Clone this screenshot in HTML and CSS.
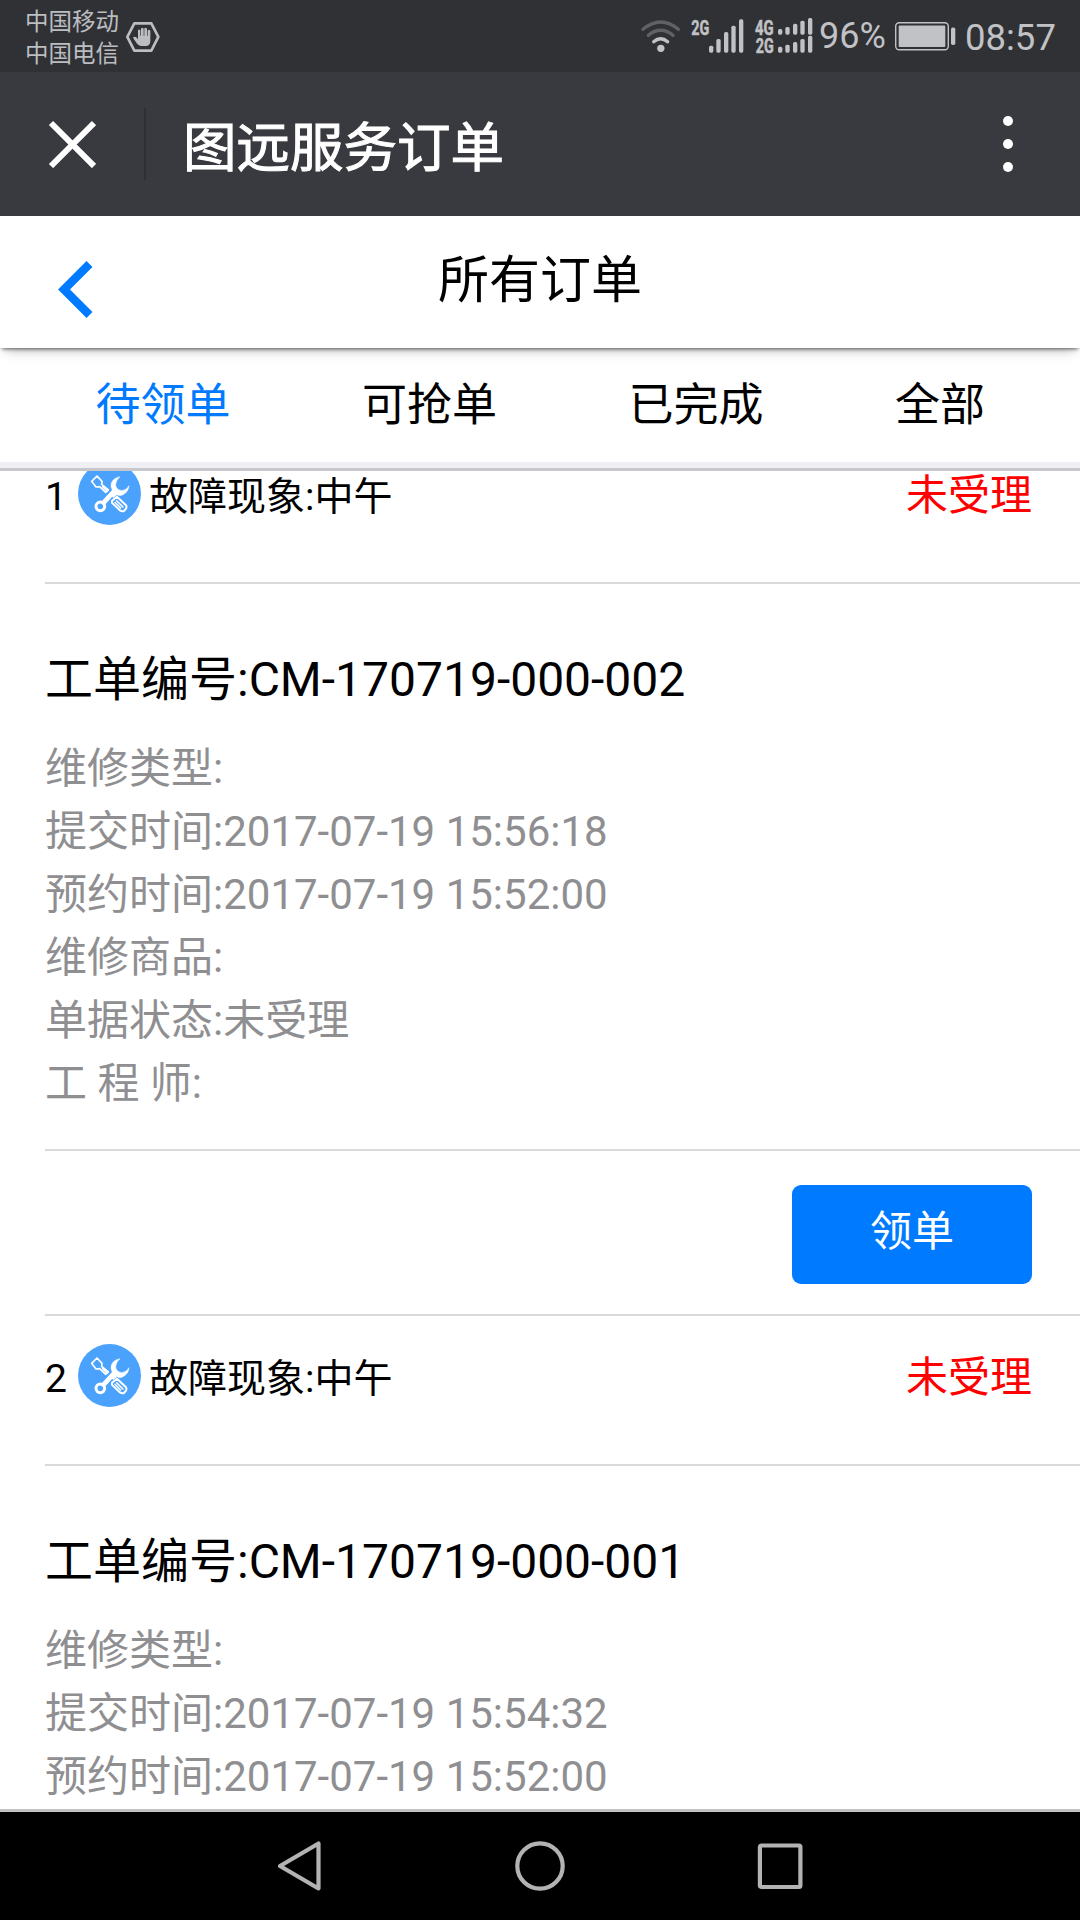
FILE: index.html
```html
<!DOCTYPE html>
<html lang="zh-CN">
<head>
<meta charset="utf-8">
<title>图远服务订单</title>
<link rel="stylesheet" href="styles.css">
</head>
<body>
<div class="phone">
  <div class="status">
    <div class="carriers"><div>中国移动</div><div>中国电信</div></div>
    <svg class="hand" width="34" height="32" viewBox="377 63 102 96">
      <path d="M402 70H453L474 110.500L453 152H402L381 110.500Z" fill="none" stroke="#bcbdc1" stroke-width="8" stroke-linejoin="round"/>
      <path d="M398 113Q402 108 408 112L413 118V91Q416 86 420 91V107H422V86Q426 81 430 86V107H432V85Q436 81 440 86V107H442V92Q446 87 450 92V124Q449 137 439 138H421Q414 137 409 130Z" fill="#bcbdc1"/>
    </svg>
    <svg class="signals" width="180" height="72" viewBox="48 0 540 216">
      <g fill="none" stroke-width="10" stroke-linecap="round">
        <path d="M69 88Q122 44 175 88" stroke="#606165"/>
        <path d="M85 106Q122 76 159 106" stroke="#606165"/>
        <path d="M101 125Q122 107 143 125" stroke="#c1c2c6"/>
      </g>
      <circle cx="122.500" cy="145" r="11" fill="#c1c2c6"/>
      <g class="net">
        <text x="214" y="104" textLength="54" lengthAdjust="spacingAndGlyphs">2G</text>
        <text x="405" y="104" textLength="56" lengthAdjust="spacingAndGlyphs">4G</text>
        <text x="407" y="158" textLength="54" lengthAdjust="spacingAndGlyphs">2G</text>
      </g>
      <g fill="#c1c2c6">
        <rect x="267" y="137" width="13" height="21" rx="5"/><rect x="289" y="117" width="13" height="41" rx="5"/><rect x="312" y="96" width="13" height="62" rx="5"/><rect x="334" y="77" width="13" height="81" rx="5"/><rect x="357" y="58" width="13" height="100" rx="5"/>
        <rect x="474" y="87" width="13" height="17" rx="5"/><rect x="496" y="81" width="13" height="23" rx="5"/><rect x="519" y="71" width="13" height="33" rx="5"/><rect x="541" y="62" width="13" height="42" rx="5"/><rect x="564" y="54" width="13" height="50" rx="5"/>
        <rect x="474" y="140" width="13" height="18" rx="5"/><rect x="496" y="134" width="13" height="24" rx="5"/><rect x="519" y="126" width="13" height="32" rx="5"/><rect x="541" y="117" width="13" height="41" rx="5"/><rect x="564" y="107" width="13" height="51" rx="5"/>
      </g>
    </svg>
    <span class="percent">96%</span>
    <svg class="battery" width="61" height="29" viewBox="0 0 61 29">
      <rect x=".7" y=".7" width="52.600" height="27" rx="3.500" fill="none" stroke="#c1c2c6" stroke-width="1.400"/>
      <rect x="3.700" y="3.400" width="46.600" height="21.600" rx="1" fill="#c1c2c6"/>
      <rect x="56" y="5.500" width="4.300" height="17.500" rx="1.700" fill="#c1c2c6"/>
    </svg>
    <span class="clock">08:57</span>
  </div>

  <div class="titlebar">
    <svg class="close" width="48" height="48" viewBox="0 0 48 48"><path d="M3 3L46 46M46 3L3 46" stroke="#fff" stroke-width="6"/></svg>
    <div class="divider"></div>
    <h1 class="app-name">图远服务订单</h1>
    <svg class="more" width="10" height="58" viewBox="0 0 10 58" fill="#fff"><circle cx="5" cy="6" r="5"/><circle cx="5" cy="29" r="5"/><circle cx="5" cy="52" r="5"/></svg>
  </div>

  <div class="header">
    <svg class="back" width="36" height="58" viewBox="0 0 36 58"><path d="M31.500 4L6 29.500L31.500 55" fill="none" stroke="#007aff" stroke-width="8.400"/></svg>
    <h2 class="page-name">所有订单</h2>
  </div>

  <div class="tabs">
    <span class="tab active">待领单</span><span class="tab">可抢单</span><span class="tab">已完成</span><span class="tab">全部</span>
  </div>

  <svg class="defs" width="0" height="0">
    <symbol id="tools" viewBox="234 132 189 189">
      <circle cx="328.500" cy="226.500" r="94.500" fill="#4ba2fd"/>
      <g fill="none" stroke="#fff" stroke-linejoin="round" stroke-linecap="round">
        <path d="M275 190L291 174L306 190L305 199L325 216L317 223L299 206L288 207Z" stroke-width="5"/>
        <path d="M308 206L319 217" stroke-width="5"/>
        <path d="M311 254L344 218" stroke-width="14"/>
        <circle cx="301" cy="265" r="13" stroke-width="9"/>
        <path d="M336 248L351 236L378 262Q381 267 378 272L372 279Q366 281 361 278L336 254Z" stroke-width="6"/>
        <path d="M350 248L369 267M345 253L362 270" stroke-width="4.500"/>
      </g>
      <path d="M360 176Q333 181 333 204Q334 212 338 218L330 229L340 239L351 230Q359 235 369 230Q385 222 387 203Q379 217 365 218Q348 215 347 200Q348 186 360 176Z" fill="#fff" stroke="#fff" stroke-width="1.500"/>
    </symbol>
  </svg>

  <div class="list">
    <div class="card">
      <div class="row head"><span class="num">1</span><svg class="tools" width="63" height="63"><use href="#tools"/></svg><span class="fault">故障现象:中午</span><span class="state">未受理</span></div>
      <div class="row body">
        <h3 class="order">工单编号:CM-170719-000-002</h3>
        <div class="details">
          <div>维修类型:</div>
          <div>提交时间:2017-07-19 15:56:18</div>
          <div>预约时间:2017-07-19 15:52:00</div>
          <div>维修商品:</div>
          <div>单据状态:未受理</div>
          <div>工 程 师:</div>
        </div>
      </div>
      <div class="row foot"><button class="take">领单</button></div>
    </div>
    <div class="card">
      <div class="row head"><span class="num">2</span><svg class="tools" width="63" height="63"><use href="#tools"/></svg><span class="fault">故障现象:中午</span><span class="state">未受理</span></div>
      <div class="row body">
        <h3 class="order">工单编号:CM-170719-000-001</h3>
        <div class="details">
          <div>维修类型:</div>
          <div>提交时间:2017-07-19 15:54:32</div>
          <div>预约时间:2017-07-19 15:52:00</div>
        </div>
      </div>
    </div>
  </div>

  <div class="navkeys">
    <svg width="52" height="56" viewBox="0 0 52 56"><path d="M6 28L44.500 5.500V50.500Z"/></svg>
    <svg width="52" height="56" viewBox="0 0 52 56"><circle cx="26" cy="28" r="22.700"/></svg>
    <svg width="52" height="56" viewBox="0 0 52 56"><rect x="5.900" y="7.500" width="40.500" height="41.500" rx="1.500"/></svg>
  </div>
</div>
</body>
</html>
```
FILE: styles.css
```css
* { box-sizing: border-box; }

body {
  margin: 0;
  font-family: Roboto, "Noto Sans CJK SC", sans-serif;
  color: #000;
  background: #fff;
}

h1, h2, h3 { margin: 0; font-weight: 400; }
svg { display: block; flex: none; }
.defs { display: none; }

.phone {
  width: 1080px;
  height: 1920px;
  display: flex;
  flex-direction: column;
  overflow: hidden;
}

/* system status bar */
.status {
  flex: none;
  height: 72px;
  display: flex;
  align-items: flex-start;
  padding-left: 25px;
  background: #303135;
  color: #c1c2c6;
  font-size: 36px;
}
.carriers { padding-top: 6px; width: 101px; font-size: 23.5px; line-height: 32px; color: #bcbdc1; }
.hand { margin-top: 21px; }
.signals { margin-left: 476px; }
.net text { font: bold 60px Roboto, sans-serif; fill: #c1c2c6; stroke: #c1c2c6; stroke-width: 1.5px; }
.percent { width: 77px; padding-left: 3px; line-height: 72px; }
.battery { margin: 22px 0 0 2px; }
.clock { margin-left: 9px; font-size: 36.5px; line-height: 75px; }

/* host application title bar */
.titlebar {
  flex: none;
  height: 144px;
  display: flex;
  align-items: center;
  padding: 0 67px 0 48px;
  background: #393a3f;
  color: #fff;
}
.divider { width: 2px; height: 72px; margin-left: 48px; background: #2f3034; }
.app-name {
  flex: 1;
  margin-left: 37px;
  padding-top: 9px;
  font-size: 53.5px;
  line-height: 60px;
  -webkit-text-stroke: 1px #fff;
}

/* page header */
.header {
  flex: none;
  height: 132px;
  display: grid;
  grid-template-columns: 180px 1fr 180px;
  position: relative;
  background: #fff;
  box-shadow: 0 3px 4px -2px rgba(0, 0, 0, .6), 0 8px 12px -6px rgba(0, 0, 0, .25);
}
.back { margin: 44px 0 0 58px; }
.page-name { font-size: 51px; line-height: 130px; text-align: center; }

.tabs {
  flex: none;
  height: 123px;
  display: flex;
  gap: 131.5px;
  padding-left: 95.5px;
  border-bottom: 3px solid #c8c7cc;
  box-shadow: inset 0 -6px #efeff4;
  font-size: 45px;
  line-height: 115px;
}
.active { color: #007aff; }

/* order list, scrolled slightly past its first row */
.list {
  flex: 1;
  display: flex;
  flex-direction: column;
  justify-content: flex-start;
  overflow: hidden;
  border-bottom: 3px solid #c2c2c2;
}
.card { flex: none; padding-left: 45px; }
.card:first-child { margin-top: -37px; }
.row { border-bottom: 2px solid #d9d9da; }
.head { height: 150px; display: flex; align-items: flex-start; padding-right: 48px; }
.num { width: 33px; font-size: 39px; line-height: 127px; }
.tools { margin-top: 28px; }
.fault { flex: 1; padding-left: 8px; font-size: 39px; line-height: 127px; }
.state { font-size: 42px; line-height: 124px; color: #f00; }
.body { height: 567px; padding-top: 66px; }
.order { font-size: 48px; line-height: 60px; }
.details { padding-top: 27px; font-size: 42px; line-height: 63px; color: #8f8f92; }
.foot { height: 165px; display: flex; justify-content: flex-end; padding: 34px 48px 0 0; }
.take {
  width: 240px;
  height: 99px;
  padding: 0 0 14px;
  border: 0;
  border-radius: 9px;
  background: #007aff;
  color: #fff;
  font: inherit;
  font-size: 42px;
}

/* system navigation keys */
.navkeys {
  flex: none;
  height: 108px;
  display: flex;
  justify-content: center;
  align-items: center;
  gap: 188px;
  background: #000;
}
.navkeys svg { fill: none; stroke: #b3b3b3; stroke-width: 4.2; stroke-linejoin: round; }
```
